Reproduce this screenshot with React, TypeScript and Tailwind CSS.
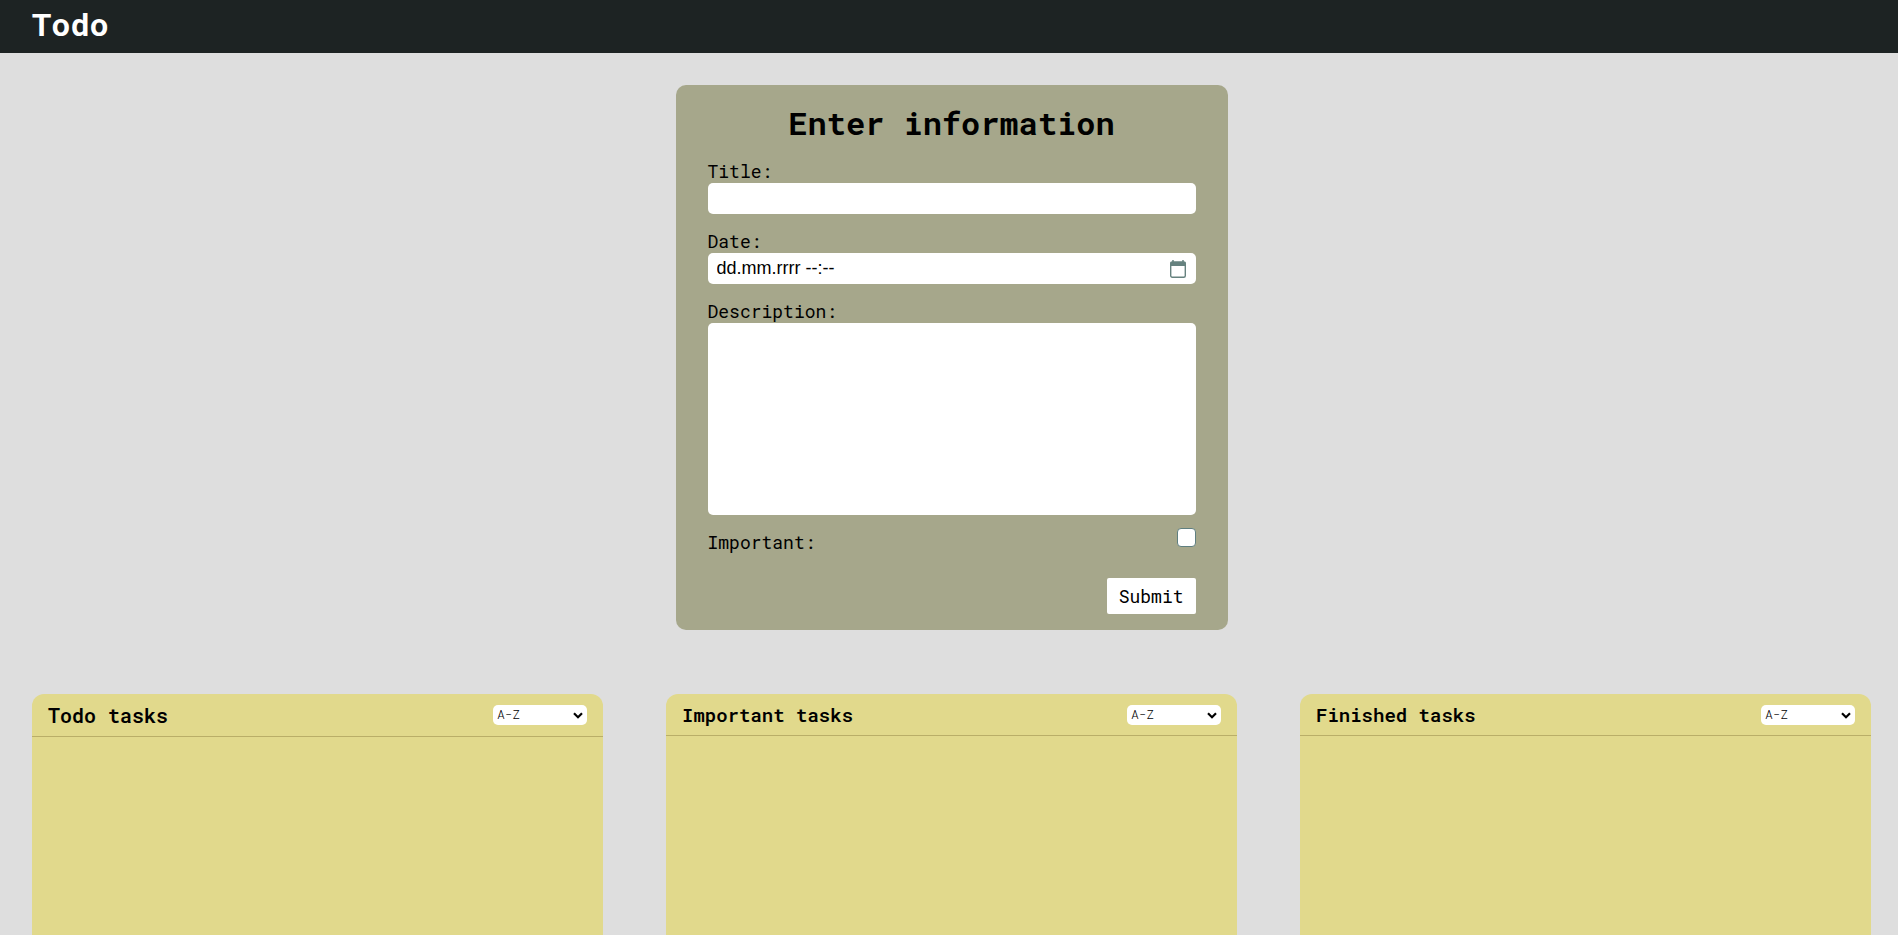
import React from 'react';
import clsx from 'clsx';

const columns = [
    { id: 'todo', title: 'Todo tasks', primary: true },
    { id: 'important', title: 'Important tasks', primary: false },
    { id: 'finished', title: 'Finished tasks', primary: false },
];

function CalendarIcon() {
    return (
        <svg width="16" height="18" viewBox="0 0 16 18" fill="none" aria-hidden="true">
            <path d="M3 0v2M13 0v2" stroke="#66827f" strokeWidth="1.500" />
            <rect x="0.700" y="2" width="14.600" height="15.300" rx="1.500" stroke="#66827f" strokeWidth="1.400" />
            <path d="M0.500 2h15V6h-15Z" fill="#66827f" />
        </svg>
    );
}

function ChevronIcon() {
    return (
        <svg
            className="pointer-events-none absolute top-[7px] right-1"
            width="10"
            height="7"
            viewBox="0 0 10 7"
            fill="none"
            aria-hidden="true"
        >
            <path d="M1 1.200 5 5.200 9 1.200" stroke="#000" strokeWidth="2.200" />
        </svg>
    );
}

function TaskForm() {
    return (
        <form
            className="mx-auto flex w-full max-w-[552px] flex-col rounded-[10px] bg-[#a6a78b] px-8 py-4 text-lg/6"
            onSubmit={(e) => e.preventDefault()}
        >
            <h2 className="mb-3.5 text-center text-[32px]/[44px] font-bold">Enter information</h2>

            <label htmlFor="title">Title:</label>
            <input id="title" type="text" className="mb-[15px] h-[31px] rounded-[5px] bg-white px-2 outline-none" />

            <label htmlFor="date">Date:</label>
            <div className="relative mb-[15px]">
                <input
                    id="date"
                    type="text"
                    placeholder="dd.mm.rrrr --:--"
                    className="block h-[31px] w-full rounded-[5px] bg-white px-[9px] font-['Liberation_Sans',sans-serif] outline-none placeholder:text-black"
                />
                <button type="button" aria-label="Pick a date" className="absolute top-[7px] right-[10px]">
                    <CalendarIcon />
                </button>
            </div>

            <label htmlFor="description">Description:</label>
            <textarea id="description" className="mb-3 h-48 resize-none rounded-[5px] bg-white p-2 outline-none" />

            <div className="flex items-start justify-between">
                <label htmlFor="important" className="pt-[3px]">Important:</label>
                <input
                    id="important"
                    type="checkbox"
                    className="mt-px size-[19px] appearance-none rounded-[4px] border border-[#5f7f80] bg-white checked:bg-[#5f7f80]"
                />
            </div>

            <button type="submit" className="mt-6 h-9 self-end rounded-[2px] bg-white px-3">
                Submit
            </button>
        </form>
    );
}

interface TaskColumnProps {
    id: string;
    title: string;
    primary: boolean;
}

function TaskColumn({ id, title, primary }: TaskColumnProps) {
    return (
        <section className="rounded-t-[12px] bg-[#e1d98c]">
            <div className="flex items-center justify-between border-b border-[#b9ae68] px-4 py-2">
                <h2 className={clsx('font-semibold', primary ? 'text-xl/[26px]' : 'text-[19px]/[25px]')}>{title}</h2>
                <div className="relative">
                    <select
                        aria-label={`Sort ${id} tasks`}
                        className="block h-5 w-[94px] appearance-none rounded-[5px] bg-white px-1 text-[13px] font-light"
                    >
                        <option>A-Z</option>
                        <option>Z-A</option>
                    </select>
                    <ChevronIcon />
                </div>
            </div>
        </section>
    );
}

export default function App() {
    return (
        <div className="flex min-h-screen flex-col bg-[#dedede] font-['Roboto_Mono','Liberation_Mono',monospace] text-black">
            <header className="h-[53px] bg-[#1d2323] px-8">
                <h1 className="text-[32px]/[48px] font-bold text-white">Todo</h1>
            </header>

            <main className="flex flex-1 flex-col pt-8 pr-[27px] pl-8">
                <TaskForm />
                <div className="mt-16 grid flex-1 grid-cols-3 gap-[63px]">
                    {columns.map((column) => (
                        <TaskColumn key={column.id} {...column} />
                    ))}
                </div>
            </main>
        </div>
    );
}
